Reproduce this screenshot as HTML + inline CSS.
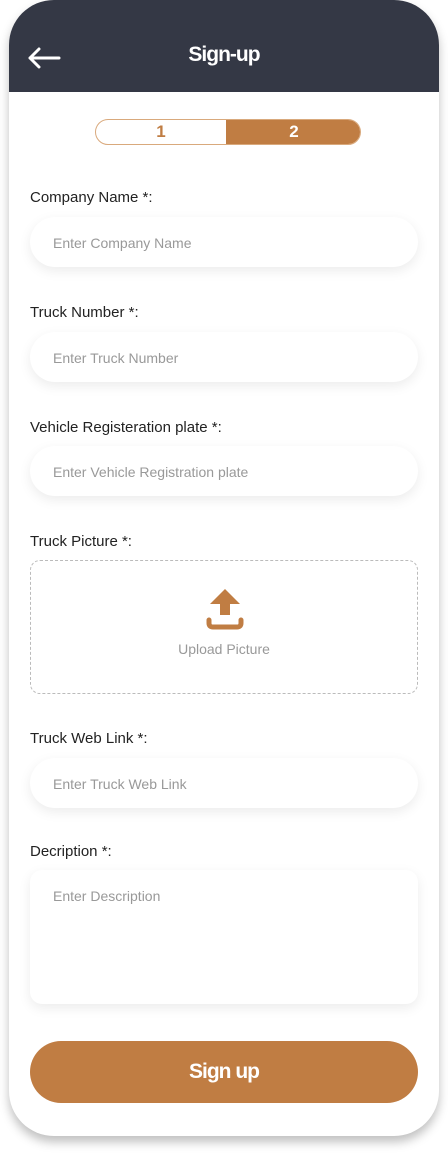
<!DOCTYPE html><html><head><style>
body{margin:0;width:448px;height:1155px;background:#fff;font-family:"Liberation Sans",sans-serif;position:relative;overflow:hidden}
.frame{position:absolute;left:9px;top:0;width:430px;height:1136px;border-radius:45px;background:#fff;box-shadow:0 6px 10px rgba(0,0,0,.25);overflow:hidden}
.hdr{position:absolute;left:0;top:0;width:430px;height:92px;background:#343845}
.title{position:absolute;left:0;width:430px;top:43px;text-align:center;color:#fff;font-weight:bold;font-size:21px;letter-spacing:-1px}
.lbl{position:absolute;left:21px;font-size:15px;color:#222}
.in{position:absolute;left:21px;width:388px;height:50px;border-radius:25px;background:#fff;box-shadow:0 4px 12px rgba(0,0,0,.08);font-size:14px;color:#999;box-sizing:border-box;padding-left:23px;line-height:52px}
</style></head><body>
<div class="frame">
<div class="hdr">
<svg style="position:absolute;left:18px;top:47px" width="34" height="22" viewBox="0 0 34 22"><path d="M32 11H3M12 2L3 11L12 20" stroke="#fff" stroke-width="3" fill="none" stroke-linecap="round" stroke-linejoin="round"/></svg>
<div class="title">Sign-up</div></div>
<div style="position:absolute;left:86px;top:119px;width:266px;height:26px;border:1px solid #d9a97c;border-radius:13px;box-sizing:border-box;overflow:hidden">
<div style="position:absolute;left:0;top:0;width:130px;height:24px;text-align:center;line-height:24px;color:#c07d43;font-weight:bold;font-size:17px">1</div>
<div style="position:absolute;left:130px;top:-1px;width:136px;height:26px;background:#c07d43;text-align:center;line-height:26px;color:#fff;font-weight:bold;font-size:17px">2</div></div>
<div class="lbl" style="top:189px">Company Name *:</div>
<div class="in" style="top:217px">Enter Company Name</div>
<div class="lbl" style="top:304px">Truck Number *:</div>
<div class="in" style="top:332px">Enter Truck Number</div>
<div class="lbl" style="top:419px">Vehicle Registeration plate *:</div>
<div class="in" style="top:446px">Enter Vehicle Registration plate</div>
<div class="lbl" style="top:533px">Truck Picture *:</div>
<div style="position:absolute;left:21px;top:560px;width:388px;height:134px;border:1px dashed #bbb;border-radius:10px;box-sizing:border-box">
<svg style="position:absolute;left:174px;top:27px" width="40" height="42" viewBox="0 0 40 42"><path d="M20 1L35 16H25V27H15V16H5Z" fill="#c07d43"/><path d="M4 32V35Q4 39 8 39H32Q36 39 36 35V32" stroke="#c07d43" stroke-width="5" fill="none" stroke-linecap="round"/></svg>
<div style="position:absolute;top:80px;width:100%;text-align:center;color:#999;font-size:14px">Upload Picture</div></div>
<div class="lbl" style="top:730px">Truck Web Link *:</div>
<div class="in" style="top:758px">Enter Truck Web Link</div>
<div class="lbl" style="top:843px">Decription *:</div>
<div class="in" style="top:870px;height:134px;border-radius:12px;line-height:normal;padding-top:18px">Enter Description</div>
<div style="position:absolute;left:21px;top:1041px;width:388px;height:62px;border-radius:31px;background:#c07d43;color:#fff;font-weight:bold;font-size:21px;text-align:center;line-height:62px;letter-spacing:-1px">Sign up</div>
</div>
</body></html>
